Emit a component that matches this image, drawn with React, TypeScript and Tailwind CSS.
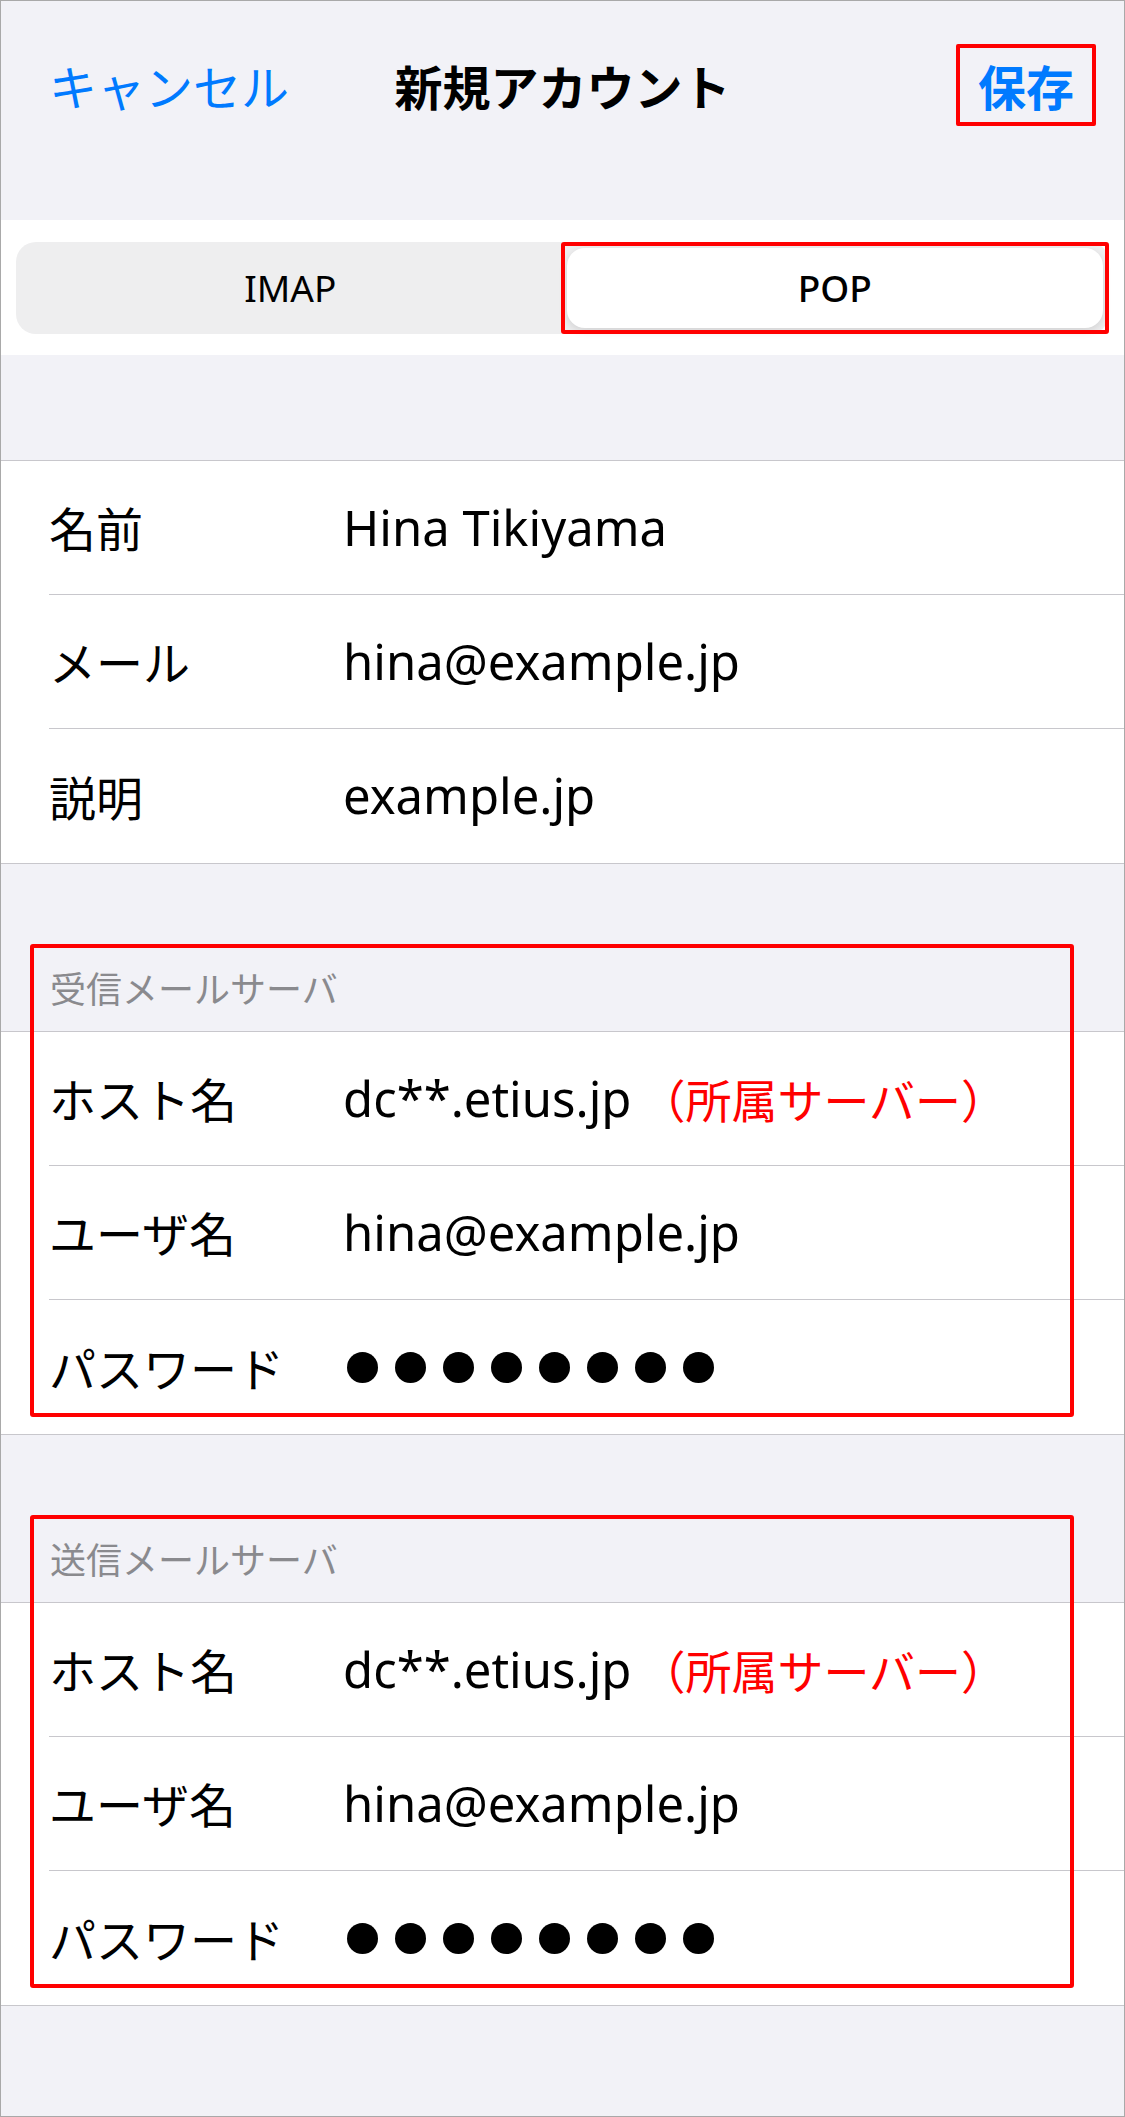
import React from "react";

const JP = { fontFamily: "'Noto Sans CJK JP', sans-serif" };
const LATIN = { fontFamily: "'Noto Sans', 'Noto Sans CJK JP', sans-serif" };

type Row = { label: string; value?: string; note?: string; secret?: boolean };

const ACCOUNT: Row[] = [
  { label: "名前", value: "Hina Tikiyama" },
  { label: "メール", value: "hina@example.jp" },
  { label: "説明", value: "example.jp" },
];

const SERVER: Row[] = [
  { label: "ホスト名", value: "dc**.etius.jp", note: "（所属サーバー）" },
  { label: "ユーザ名", value: "hina@example.jp" },
  { label: "パスワード", secret: true },
];

function Dots() {
  return (
    <div className="flex items-center gap-[17px] pl-[4px]">
      {Array.from({ length: 8 }).map((_, i) => (
        <span key={i} className="block h-[31px] w-[31px] rounded-full bg-black" />
      ))}
    </div>
  );
}

function Group({ rows }: { rows: Row[] }) {
  return (
    <div className="border-y border-[#c8c7cc] bg-white">
      {rows.map((r, i) => (
        <div key={r.label} className="pl-[48px]">
          <div
            className={`flex h-[134px] items-center ${
              i < rows.length - 1 ? "border-b border-[#c8c7cc]" : ""
            }`}
          >
            <div className="w-[294px] shrink-0 text-[47px] text-black" style={JP}>
              {r.label}
            </div>
            {r.secret ? (
              <Dots />
            ) : (
              <div className="flex items-center">
                <span className="text-[49px] text-black" style={LATIN}>
                  {r.value}
                </span>
                {r.note && (
                  <span className="ml-[8px] text-[46px] text-[#ff0000]" style={JP}>
                    {r.note}
                  </span>
                )}
              </div>
            )}
          </div>
        </div>
      ))}
    </div>
  );
}

function ServerSection({ title }: { title: string }) {
  return (
    <div className="relative">
      <div className="flex h-[167px] items-end pb-[26px] pl-[49px]">
        <span className="text-[36px] leading-[36px] text-[#8a8a8e]" style={JP}>
          {title}
        </span>
      </div>
      <Group rows={SERVER} />
      <div className="pointer-events-none absolute top-[80px] bottom-[18px] left-[29px] right-[50px] rounded-[3px] border-4 border-[#ff0000]" />
    </div>
  );
}

export default function App() {
  return (
    <div className="h-[2117px] w-[1125px] border border-[#a9a9a9] bg-[#f2f2f7]">
      {/* nav bar */}
      <div className="h-[219px]">
        <div className="grid h-[168px] grid-cols-[1fr_auto_1fr] items-center px-[28px]" style={JP}>
          <button className="justify-self-start pl-[20px] text-[48px] text-[#007aff]">
            キャンセル
          </button>
          <div className="text-[48px] font-bold text-black">新規アカウント</div>
          <div className="justify-self-end rounded-[2px] border-4 border-[#ff0000] px-[18px]">
            <span className="block text-[48px] leading-[74px] font-bold text-[#007aff]">保存</span>
          </div>
        </div>
      </div>

      {/* IMAP / POP */}
      <div className="flex h-[135px] items-center bg-white px-[15px]">
        <div className="grid h-[92px] w-full grid-cols-2 gap-[8px] rounded-[20px] bg-[#eeeeef] p-[6px]" style={LATIN}>
          <div className="flex items-center justify-center text-[37px] font-normal text-black">IMAP</div>
          <div className="relative">
            <div className="flex h-full items-center justify-center rounded-[18px] bg-white text-[37px] font-medium text-black shadow-[0_3px_8px_rgba(0,0,0,0.12)]">
              POP
            </div>
            <div className="pointer-events-none absolute -inset-[6px] rounded-[3px] border-4 border-[#ff0000]" />
          </div>
        </div>
      </div>

      <div className="h-[105px]" />
      <Group rows={ACCOUNT} />

      <ServerSection title="受信メールサーバ" />
      <ServerSection title="送信メールサーバ" />
    </div>
  );
}
